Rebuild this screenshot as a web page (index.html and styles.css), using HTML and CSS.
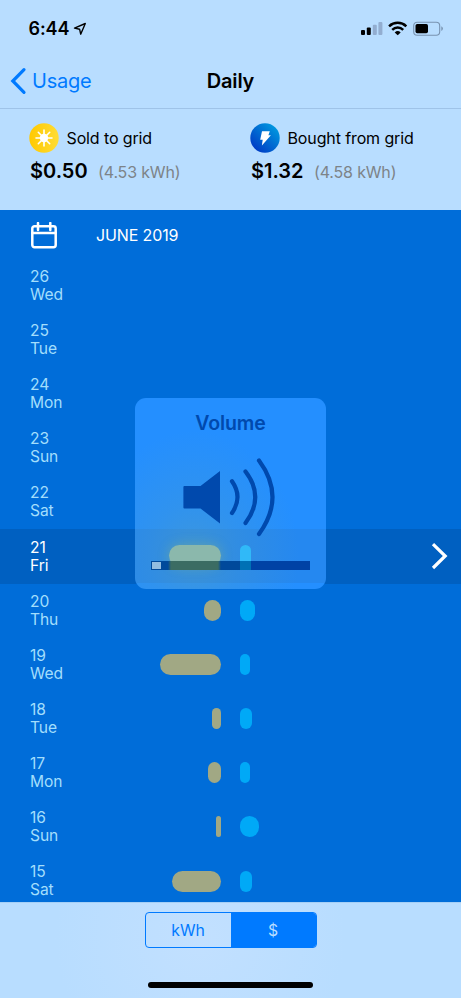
FILE: index.html
```html
<!DOCTYPE html>
<html lang="en">
<head>
<meta charset="utf-8">
<title>Daily</title>
<link rel="stylesheet" href="styles.css">
</head>
<body>
<div class="screen">
  <header class="top">
    <div class="status">
      <span class="time">6:44</span>
      <svg class="locate" width="14" height="14" viewBox="0 0 14 14"><path d="M1.5 6.1 12.3 1.5 7.7 12.2 6.6 7.2Z" fill="none" stroke="#000" stroke-width="1.4" stroke-linejoin="round"/></svg>
      <svg class="signals" width="84" height="16" viewBox="0 0 84 16">
        <rect x="0" y="9" width="4" height="5" rx="1"/><rect x="5.8" y="6.4" width="4" height="7.6" rx="1"/>
        <g fill="#92add0"><rect x="11.8" y="3.7" width="4" height="10.3" rx="1"/><rect x="17.4" y="1" width="4" height="13" rx="1"/></g>
        <g fill="none" stroke="#000" stroke-width="2.5"><path d="M28.1 5.3a12.5 12.5 0 0 1 17.2 0"/><path d="M31.2 8.8a8 8 0 0 1 11 0"/></g>
        <path d="M33.7 11.4a4.5 4.5 0 0 1 6 0L36.7 14.3Z"/>
        <rect x="52.7" y="1.2" width="26" height="13" rx="3.5" fill="none" stroke="#7893b1" stroke-width="1.1"/>
        <rect x="54.5" y="3" width="12.5" height="9.3" rx="1.7"/>
        <path d="M80.3 5.2q1.6.6 1.6 2.4t-1.6 2.4Z" fill="#7893b1"/>
      </svg>
    </div>
    <nav class="nav">
      <a class="back"><svg width="18" height="28" viewBox="0 0 18 28"><path d="M14 2.7 2.8 14 14 25.3" fill="none" stroke="#007aff" stroke-width="3.2" stroke-linecap="round"/></svg><span>Usage</span></a>
      <h1>Daily</h1>
    </nav>
  </header>
  <section class="summary">
    <div class="total">
      <div class="kind">
        <svg width="30" height="30" viewBox="0 0 30 30"><defs><linearGradient id="sun" x2="1" y2="0"><stop stop-color="#ffc900"/><stop offset="1" stop-color="#ffdc35"/></linearGradient></defs><circle cx="15" cy="15" r="14.7" fill="url(#sun)"/><circle cx="15" cy="15" r="4.2" fill="#fff"/><path d="M15 7v16M7 15h16M9.3 9.3l11.4 11.4M20.7 9.3 9.3 20.7" stroke="#fff" stroke-width="1.6" stroke-linecap="round"/></svg>
        <span>Sold to grid</span>
      </div>
      <div class="values"><strong>$0.50</strong><span>(4.53 kWh)</span></div>
    </div>
    <div class="total">
      <div class="kind">
        <svg width="30" height="30" viewBox="0 0 30 30"><defs><linearGradient id="bolt" x1=".1" y1=".9" x2=".85" y2=".1"><stop stop-color="#0038c4"/><stop offset="1" stop-color="#0098df"/></linearGradient></defs><circle cx="15" cy="15" r="14.7" fill="url(#bolt)"/><path d="M12 8.2h7.8l-1.4 4h2.5l-9 10.4.8-5.9h-2.5Z" fill="#fff"/></svg>
        <span>Bought from grid</span>
      </div>
      <div class="values"><strong>$1.32</strong><span>(4.58 kWh)</span></div>
    </div>
  </section>
  <main class="list">
    <div class="month">
      <svg width="28" height="28" viewBox="0 0 28 28" fill="none" stroke="#fff" stroke-width="2.5"><rect x="2.3" y="4.2" width="23.4" height="21" rx="2.2"/><path d="M2.3 11h23.4M8 1v7M20.3 1v7" stroke-linecap="round"/></svg>
      <span>JUNE 2019</span>
    </div>
    <div class="day"><div class="date">26<br>Wed</div></div>
    <div class="day"><div class="date">25<br>Tue</div></div>
    <div class="day"><div class="date">24<br>Mon</div></div>
    <div class="day"><div class="date">23<br>Sun</div></div>
    <div class="day"><div class="date">22<br>Sat</div></div>
    <div class="day selected"><div class="date">21<br>Fri</div><div class="sold"><i style="width:52.5px"></i></div><div class="bought"><i style="width:11px"></i></div>
      <svg class="chevron" width="20" height="30" viewBox="0 0 20 30"><path d="M3 3.2 15.2 15 3 27" fill="none" stroke="#fff" stroke-width="3.2"/></svg></div>
    <div class="day"><div class="date">20<br>Thu</div><div class="sold"><i style="width:17px"></i></div><div class="bought"><i style="width:14.3px"></i></div></div>
    <div class="day"><div class="date">19<br>Wed</div><div class="sold"><i style="width:62.3px"></i></div><div class="bought"><i style="width:10px"></i></div></div>
    <div class="day"><div class="date">18<br>Tue</div><div class="sold"><i style="width:9px"></i></div><div class="bought"><i style="width:12px"></i></div></div>
    <div class="day"><div class="date">17<br>Mon</div><div class="sold"><i style="width:13.5px"></i></div><div class="bought"><i style="width:9.3px"></i></div></div>
    <div class="day"><div class="date">16<br>Sun</div><div class="sold"><i style="width:5.2px"></i></div><div class="bought"><i style="width:19.2px"></i></div></div>
    <div class="day"><div class="date">15<br>Sat</div><div class="sold"><i style="width:48.7px"></i></div><div class="bought"><i style="width:11.4px"></i></div></div>
  </main>
  <footer class="bottom">
    <div class="segments"><span>kWh</span><span class="active">$</span></div>
    <div class="home"></div>
  </footer>
  <div class="volume">
    <div class="tint tint-sold"></div>
    <div class="tint tint-bought"></div>
    <h2>Volume</h2>
    <svg width="96" height="84" viewBox="0 0 96 84"><path d="M5.4 31Q4.4 31 4.4 32V52.5Q4.4 53.5 5.4 53.5H21.5L41 68.5V16L21.5 31Z" fill="#0049ad"/><path d="M53 26.3Q64 42 53 58M66.5 16.5Q86 42 66.5 68M80 5.5Q107 42 80 79" fill="none" stroke="#0049ad" stroke-width="4.2" stroke-linecap="round"/></svg>
    <div class="track"><div class="level"></div></div>
  </div>
</div>
</body>
</html>
```
FILE: styles.css
```css
* { box-sizing: border-box; }
body { margin: 0; font-family: Inter, "Liberation Sans", sans-serif; color: #000; }
.screen { position: relative; width: 461px; height: 998px; overflow: hidden; display: flex; flex-direction: column; background: #b8ddff; }
.top { height: 109px; flex: none; border-bottom: 1px solid #9fc3e8; }
.status { display: flex; height: 54px; padding: 3px 16px 0 28.5px; align-items: center; }
.time { font-size: 18px; font-weight: 600; letter-spacing: -.1px; }
.locate { margin-left: 4px; }
.signals { margin-left: auto; }
.nav { display: grid; grid-template-columns: 1fr 1fr 1fr; height: 54px; padding: 0 10px; align-items: center; }
.back { display: flex; align-items: center; color: #007aff; font-size: 20px; letter-spacing: -.25px; }
.back span { margin-left: 4px; }
h1 { margin: 0; font-size: 20px; font-weight: 600; text-align: center; letter-spacing: -.2px; }
.summary { height: 101px; flex: none; display: flex; padding: 14px 0 0 29px; }
.total { width: 221px; flex: none; }
.kind { display: flex; align-items: center; height: 30px; gap: 7.5px; font-size: 16px; letter-spacing: -.12px; }
.values { display: flex; align-items: baseline; margin-top: 5px; padding-left: 1px; line-height: 26px; }
.values strong { font-size: 20px; font-weight: 600; }
.values span { margin-left: 10.5px; font-size: 16px; letter-spacing: -.17px; color: #7d8388; }
.list { height: 692px; flex: none; overflow: hidden; background: #006dd9; }
.month { display: flex; height: 49px; padding: 2px 0 0 30px; align-items: center; color: #fff; font-size: 16px; letter-spacing: -.12px; }
.month span { margin: -2px 0 0 38px; }
.day { display: grid; grid-template-columns: 130px 61px 1fr 30px; align-items: center; height: 54.1px; padding-left: 30px; color: #a3defc; }
.date { font-size: 15.6px; line-height: 18px; letter-spacing: -.1px; }
.sold { display: flex; justify-content: flex-end; }
.bought { padding-left: 19.3px; }
.sold i, .bought i { display: block; height: 21px; border-radius: 11px; background: #a1a884; }
.bought i { background: #00a9f7; }
.selected { background: #0060c1; color: #fff; }
.chevron { justify-self: start; margin: 0 0 2px -1px; }
.bottom { flex: 1; display: flex; flex-direction: column; align-items: center; padding-top: 9px; background: radial-gradient(circle at 200px 35px, #c2e0ff, #b8ddff 145px); border-top: 1px solid #a5cff6; }
.segments { display: grid; grid-template-columns: 1fr 1fr; width: 172px; height: 36px; border: 1.2px solid #007aff; border-radius: 4px; overflow: hidden; line-height: 35px; text-align: center; font-size: 15.8px; letter-spacing: -.1px; color: #007aff; }
.active { background: #007aff; color: #b8ddff; }
.home { width: 165px; height: 6px; margin-top: 34px; border-radius: 3px; background: #000; }
.volume { position: absolute; left: 135px; top: 398px; width: 191px; height: 190.5px; border-radius: 11px; overflow: hidden; background: radial-gradient(ellipse at 59px 158px, #62a2a866, #62a2a830 45px, #2588f000 105px), linear-gradient(#248fff 0 131px, #2588f0 131px 185px, #248fff 185px); display: flex; flex-direction: column; align-items: center; }
.volume h2 { position: relative; margin: 12px 0 19px; font-size: 19.5px; letter-spacing: -.1px; line-height: 26px; font-weight: 600; color: #0049ad; }
.volume svg { position: relative; margin-left: -7px; flex: none; }
.track { position: relative; width: 159px; height: 9px; margin-top: 21.7px; padding: 1px; background: linear-gradient(90deg, #00499b 0 17px, #3b6c63 20px 67px, #00499b 70px 89px, #0071b5 89px 100px, #0042a5 100px); }
.level { width: 9px; height: 7px; background: #92bce0; }
.tint { position: absolute; top: 147px; height: 21px; border-radius: 11px; }
.tint-sold { left: 33.5px; width: 52.5px; background: #8bb8ac; box-shadow: 0 0 12px #8cb77f70; }
.tint-bought { left: 105.3px; width: 11px; background: #30b9f8; }
```
